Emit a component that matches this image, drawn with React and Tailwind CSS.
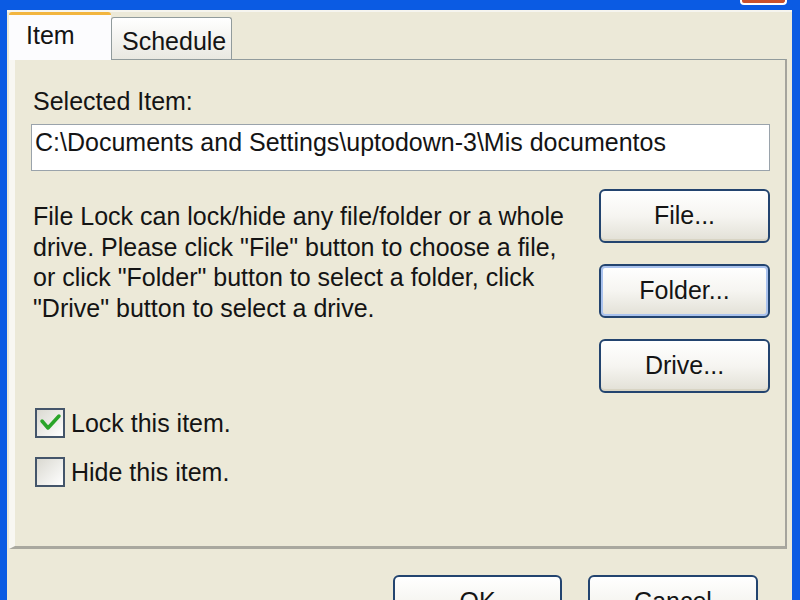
function XpButton({ label, focused = false, className = '' }) {
  return (
    <div
      className={`flex items-center justify-center rounded-[6px] border-2 border-[#23446F] bg-gradient-to-b from-white via-[#F6F5F1] to-[#E2E0D6] ${
        focused ? 'shadow-[inset_0_0_0_2px_#A9C2EE]' : 'shadow-[inset_0_-2px_0_#D8D4C4]'
      } ${className}`}
    >
      {label}
    </div>
  );
}

function XpCheck({ checked = false, label }) {
  return (
    <div className="flex items-center gap-[6px]">
      <div className="w-[30px] h-[30px] border-2 border-[#44556A] bg-gradient-to-br from-[#DAD9D1] to-white flex items-center justify-center">
        {checked && (
          <svg width="24" height="24" viewBox="0 0 24 24">
            <path d="M4 10 L10 17 L21 5" stroke="#2AA52A" strokeWidth="3.5" fill="none" strokeLinecap="round" strokeLinejoin="round" />
          </svg>
        )}
      </div>
      <span className="leading-[28px]">{label}</span>
    </div>
  );
}

export default function App() {
  return (
    <div className="w-[800px] h-[600px] bg-[#0B5BE3] flex flex-col overflow-hidden font-['Liberation_Sans',Arial,sans-serif] text-[25px] text-[#141414]">
      {/* Title bar edge with close button bottom */}
      <div className="h-[10px] shrink-0 flex justify-end pr-[13px]">
        <div className="w-[47px] h-[5px] bg-[#C9512D] border-x-2 border-b-2 border-white rounded-b-[4px]" />
      </div>

      <div className="flex-1 ml-[7px] mr-[8px] bg-[#ECE9D8] flex flex-col border-t-2 border-[#F6F5EF]">
        {/* Tabs */}
        <div className="h-[47px] shrink-0 flex items-end pl-[2px]">
          <div className="relative z-10 -mb-[1px] w-[102px] h-[48px] bg-[#FCFCFE] border-t-[3px] border-[#F2B53F] rounded-t-[3px] pl-[17px] pt-[6px] leading-[28px]">
            Item
          </div>
          <div className="w-[121px] h-[42px] border border-b-0 border-[#919B9C] rounded-t-[3px] bg-gradient-to-b from-white to-[#E9E8E1] pl-[10px] pt-[9px] leading-[28px]">
            Schedule
          </div>
        </div>

        {/* Tab panel */}
        <div className="h-[490px] shrink-0 ml-[2px] mr-[5px] border-t border-t-[#919B9C] border-r-2 border-r-[#A5A49D] border-b-[3px] border-b-[#A9A89F] border-l-[6px] border-l-[#F8F7F2] pl-[16px] pr-[15px] pt-[27px] flex flex-col">
          <div className="ml-[2px] leading-[28px]">Selected Item:</div>
          <div className="mt-[9px] h-[47px] bg-white border border-[#9AA3AB] pl-[3px] pt-[3px] leading-[28px] whitespace-nowrap">
            C:\Documents and Settings\uptodown-3\Mis documentos
          </div>

          <div className="mt-[18px] flex justify-between">
            <p className="mt-[12px] ml-[2px] leading-[30.5px] whitespace-nowrap">
              File Lock can lock/hide any file/folder or a whole
              <br />
              drive. Please click "File" button to choose a file,
              <br />
              or click "Folder" button to select a folder, click
              <br />
              "Drive" button to select a drive.
            </p>
            <div className="w-[171px] flex flex-col gap-[21px]">
              <XpButton label="File..." className="h-[54px]" />
              <XpButton label="Folder..." focused className="h-[54px]" />
              <XpButton label="Drive..." className="h-[54px]" />
            </div>
          </div>

          <div className="mt-[15px] ml-[4px] flex flex-col gap-[19px]">
            <XpCheck checked label="Lock this item." />
            <XpCheck label="Hide this item." />
          </div>
        </div>

        {/* Footer buttons */}
        <div className="flex-1 flex justify-end items-start pt-[26px] pr-[34px] gap-[26px]">
          <XpButton label="OK" className="w-[169px] h-[54px] shrink-0" />
          <XpButton label="Cancel" className="w-[170px] h-[54px] shrink-0" />
        </div>
      </div>
    </div>
  );
}
